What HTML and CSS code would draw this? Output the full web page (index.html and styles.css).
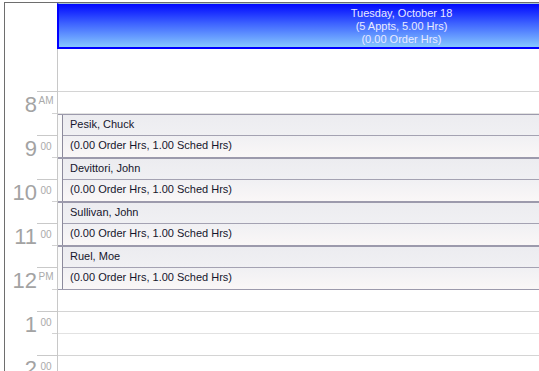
FILE: index.html
```html
<!DOCTYPE html>
<html>
<head>
<meta charset="utf-8">
<link rel="stylesheet" href="styles.css">
</head>
<body>
<div class="cal">
  <div class="times">
    <div class="times-top"></div>
    <div class="hour"><div class="num">8</div><div class="side"><div class="suf">AM</div><div class="tick"></div></div></div>
    <div class="hour"><div class="num">9</div><div class="side"><div class="suf min">00</div><div class="tick"></div></div></div>
    <div class="hour"><div class="num">10</div><div class="side"><div class="suf min">00</div><div class="tick"></div></div></div>
    <div class="hour"><div class="num">11</div><div class="side"><div class="suf min">00</div><div class="tick"></div></div></div>
    <div class="hour"><div class="num">12</div><div class="side"><div class="suf">PM</div><div class="tick"></div></div></div>
    <div class="hour"><div class="num">1</div><div class="side"><div class="suf min">00</div><div class="tick"></div></div></div>
    <div class="hour"><div class="num">2</div><div class="side"><div class="suf min">00</div><div class="tick"></div></div></div>
  </div>
  <div class="day">
    <div class="day-head">
      <div>Tuesday, October 18</div>
      <div>(5 Appts, 5.00 Hrs)</div>
      <div>(0.00 Order Hrs)</div>
    </div>
    <div class="day-body">
      <div class="allday"></div>
      <div class="slot slot-hour"></div><div class="slot slot-half"></div>
      <div class="slot slot-hour"></div><div class="slot slot-half"></div>
      <div class="slot slot-hour"></div><div class="slot slot-half"></div>
      <div class="slot slot-hour"></div><div class="slot slot-half"></div>
      <div class="slot slot-hour"></div><div class="slot slot-half"></div>
      <div class="slot slot-hour"></div><div class="slot slot-half"></div>
      <div class="slot slot-hour"></div><div class="slot slot-half"></div>
      <div class="appts">
        <div class="appt"><div class="strip"></div><div class="appt-main"><div class="appt-title">Pesik, Chuck</div><div class="appt-detail">(0.00 Order Hrs, 1.00 Sched Hrs)</div></div></div>
        <div class="appt"><div class="strip"></div><div class="appt-main"><div class="appt-title">Devittori, John</div><div class="appt-detail">(0.00 Order Hrs, 1.00 Sched Hrs)</div></div></div>
        <div class="appt"><div class="strip"></div><div class="appt-main"><div class="appt-title">Sullivan, John</div><div class="appt-detail">(0.00 Order Hrs, 1.00 Sched Hrs)</div></div></div>
        <div class="appt"><div class="strip"></div><div class="appt-main"><div class="appt-title">Ruel, Moe</div><div class="appt-detail">(0.00 Order Hrs, 1.00 Sched Hrs)</div></div></div>
      </div>
    </div>
  </div>
</div>
</body>
</html>
```
FILE: styles.css
```css
html, body {
  overflow: hidden;
  background: #ffffff;
}
body {
  margin: 2px 0 0 4px;
  height: 369px;
  font-family: "Liberation Sans", Arial, sans-serif;
  font-size: 11px;
}
.cal {
  display: flex;
  align-items: flex-start;
  border-top: 1px solid #6e6e6e;
  border-left: 1px solid #6e6e6e;
  overflow: hidden;
  height: 368px;
}
.times {
  flex: 0 0 52px;
  display: flex;
  flex-direction: column;
}
.times-top {
  height: 88px;
}
.hour {
  display: grid;
  grid-template-columns: 32px 20px;
  height: 44px;
}
.num {
  padding-top: 3px;
  font-size: 22px;
  line-height: 22px;
  color: #a3a3a3;
  text-align: right;
}
.side {
  border-top: 1px solid #c9c9c9;
}
.suf {
  height: 21px;
  box-sizing: border-box;
  padding: 3px 3px 0 1px;
  font-size: 10px;
  line-height: 12px;
  color: #aaaaaa;
  text-align: center;
}
.suf.min {
  padding-top: 5px;
}
.tick {
  margin-left: 15px;
  border-top: 1px solid #d2d2d2;
}
.day {
  flex: 0 0 687px;
  display: flex;
  flex-direction: column;
}
.day-head {
  box-sizing: border-box;
  height: 46px;
  padding-top: 3px;
  border-top: 1px solid #a6c4d4;
  border-left: 2px solid #0000ff;
  border-bottom: 2px solid #0000ff;
  background: linear-gradient(to bottom, #0008ff 0%, #3d62ff 45%, #86c8ff 100%);
  color: #eaeaff;
  text-align: center;
  line-height: 13px;
}
.day-body {
  position: relative;
  border-left: 1px solid #c8c8c8;
}
.allday {
  height: 42px;
}
.slot {
  height: 21px;
}
.slot-hour {
  border-top: 1px solid #d4d4d4;
}
.slot-half {
  border-top: 1px solid #e2e2e2;
}
.appts {
  position: absolute;
  top: 65px;
  left: 0;
  right: 0;
  display: flex;
  flex-direction: column;
}
.appt {
  display: flex;
  border-top: 1px solid #9c9aac;
  border-bottom: 1px solid #9c9aac;
  color: #15152c;
}
.strip {
  flex: 0 0 4px;
  background: #fafafa;
}
.appt-main {
  flex: 1;
  border-left: 1px solid #8c8a9c;
}
.appt-title {
  height: 20px;
  padding-left: 7px;
  line-height: 18px;
  border-bottom: 1px solid #a4a2b2;
  background: linear-gradient(to bottom, #ececf0, #f0f0f3);
}
.appt-detail {
  height: 21px;
  padding-left: 7px;
  line-height: 19px;
  background: linear-gradient(to bottom, #f0f0f3, #faf7f7);
}
```
